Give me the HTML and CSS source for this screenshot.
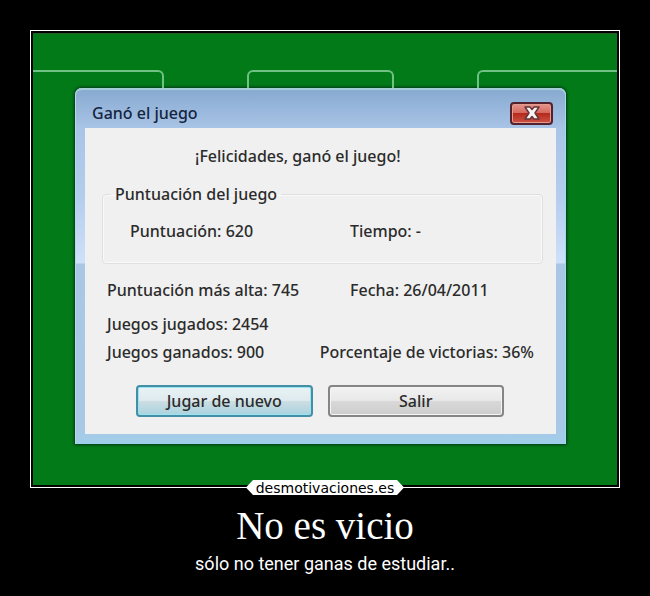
FILE: index.html
```html
<!DOCTYPE html>
<html lang="es">
<head>
    <meta charset="UTF-8">
    <meta name="viewport" content="width=device-width, initial-scale=1.0">
    <title>No es vicio</title>
    <link rel="stylesheet" href="styles.css">
</head>
<body>

<div class="poster">
    <div class="frame">
        <div class="table">
            <div class="slots">
                <div class="slot slot-first"></div>
                <div class="slot"></div>
                <div class="slot slot-last"></div>
            </div>

            <div class="dialog" role="dialog" aria-labelledby="dialog-title">
                <div class="titlebar">
                    <span id="dialog-title">Ganó el juego</span>
                    <button class="close" type="button" aria-label="Cerrar">
                        <svg width="20" height="16" viewBox="0 0 20 16">
                            <path d="M3 2h5l2 2.500L12 2h5l-4 6 4 6h-5l-2-2.500L8 14H3l4-6z" fill="#f7f3f2" stroke="#66353a" stroke-width="1.500" stroke-linejoin="round"/>
                        </svg>
                    </button>
                </div>

                <div class="content">
                    <p class="congrats">¡Felicidades, ganó el juego!</p>
                    <fieldset class="score">
                        <legend>Puntuación del juego</legend>
                        <div class="columns">
                            <span>Puntuación: 620</span>
                            <span>Tiempo: -</span>
                        </div>
                    </fieldset>
                    <div class="stats">
                        <div class="columns best">
                            <span>Puntuación más alta: 745</span>
                            <span>Fecha: 26/04/2011</span>
                        </div>
                        <div>Juegos jugados: 2454</div>
                        <div class="won">
                            <span>Juegos ganados: 900</span>
                            <span>Porcentaje de victorias: 36%</span>
                        </div>
                    </div>
                    <div class="buttons">
                        <button class="btn btn-default" type="button">Jugar de nuevo</button>
                        <button class="btn" type="button">Salir</button>
                    </div>
                </div>
            </div>
        </div>
        <div class="brand">desmotivaciones.es</div>
    </div>

    <h1>No es vicio</h1>
    <p class="subtitle">sólo no tener ganas de estudiar..</p>
</div>

</body>
</html>
```
FILE: styles.css
```css
* {
    box-sizing: border-box;
}
body {
    margin: 0;
    background: #000;
    color: #fff;
}
h1, p {
    margin: 0;
}
.poster {
    padding: 30px;
    text-align: center;
}
.frame {
    position: relative;
    border: 1px solid #fff;
    padding: 2px;
}
.table {
    background: #027a18;
    border-top: 1px solid #2c5a2b;
    padding: 36px 0 41px;
    text-align: left;
}

/* empty card places behind the window */
.slots {
    display: grid;
    grid-template-columns: 131fr 147fr 140fr;
    gap: 83px;
}
.slot {
    height: 18px;
    border: 2px solid #6fc184;
    border-bottom: 0;
    border-radius: 6px 6px 0 0;
}
.slot-first {
    border-left: 0;
    border-top-left-radius: 0;
}
.slot-last {
    border-right: 0;
    border-top-right-radius: 0;
}

.dialog {
    margin: 0 51px 0 42px;
    padding: 0 10px 10px;
    border-radius: 7px 7px 1px 1px;
    background: linear-gradient(#87a9d0, #a8c4e6 40px, #b4cdef 110px, #cfe0fa 175px, #a9c6e6 176px, #a9c8e8 340px, #a0cfea);
    box-shadow: inset 0 2px 1px #a6cfd6, inset 1px 0 #b5dbe6, inset -1px 0 #a5dcec, 0 0 3px 1px #06351b;
    color: #2b2b2b;
    font-family: "Noto Sans", "Open Sans", sans-serif;
    font-size: 16px;
    font-weight: 500;
    line-height: 22px;
}
.titlebar {
    display: flex;
    justify-content: space-between;
    align-items: center;
    height: 40px;
    padding: 10px 3px 0 7px;
    color: #15243f;
}
.close {
    display: flex;
    justify-content: center;
    align-items: center;
    width: 43px;
    height: 23px;
    padding: 0;
    border: 2px solid #54222e;
    border-radius: 4px;
    background: linear-gradient(#e5968c, #d4675c 48%, #b52a1d 50%, #cf5343);
    box-shadow: inset 0 0 0 1px #e39a90;
}
.content {
    padding: 17px 13px 17px 17px;
    background: #f0f0f0;
}
.congrats {
    padding-left: 93px;
}
.score {
    min-width: 0;
    margin: 16px 0 0;
    padding: 15px 8px 21px;
    border: 1px solid #dfdfdf;
    border-radius: 4px;
    box-shadow: inset 0 0 0 1px #f9f9f9;
}
.score legend {
    padding: 0 4px;
}
.columns {
    display: grid;
    grid-template-columns: 220px 1fr;
}
.score .columns {
    padding-left: 19px;
}
.stats {
    display: flex;
    flex-direction: column;
    gap: 6px;
    padding: 15px 9px 0 5px;
}
.best {
    grid-template-columns: 243px 1fr;
    margin-bottom: 6px;
}
.won {
    display: flex;
    justify-content: space-between;
}
.buttons {
    display: flex;
    gap: 15px;
    padding: 22px 39px 0 34px;
}
.btn {
    flex: 1;
    height: 32px;
    padding: 0;
    border: 2px solid #858585;
    border-radius: 4px;
    background: linear-gradient(#f2f2f2, #e8e8e8 48%, #d8d8d8 52%, #cdcdcd);
    box-shadow: inset 0 0 0 1px #f5f5f5;
    color: #2b2b2b;
    font: inherit;
}
.btn-default {
    border-color: #438fa6;
    background: linear-gradient(#e8f3f6, #dfeaee 48%, #cbdde3 52%, #a9d3df);
    box-shadow: inset 0 0 0 1px #9be3f2;
}

.brand {
    position: absolute;
    left: 50%;
    bottom: -8px;
    width: 158px;
    height: 15px;
    transform: translateX(-50%);
    clip-path: polygon(7px 0, 151px 0, 100% 50%, 151px 100%, 7px 100%, 0 50%);
    background: #fff;
    color: #000;
    font: 14px/16px "DejaVu Sans", sans-serif;
}
h1 {
    margin-top: 16px;
    font: 39px/44px "Liberation Serif", serif;
}
.subtitle {
    margin-top: 5px;
    font: 18px/22px Roboto, sans-serif;
}
```
